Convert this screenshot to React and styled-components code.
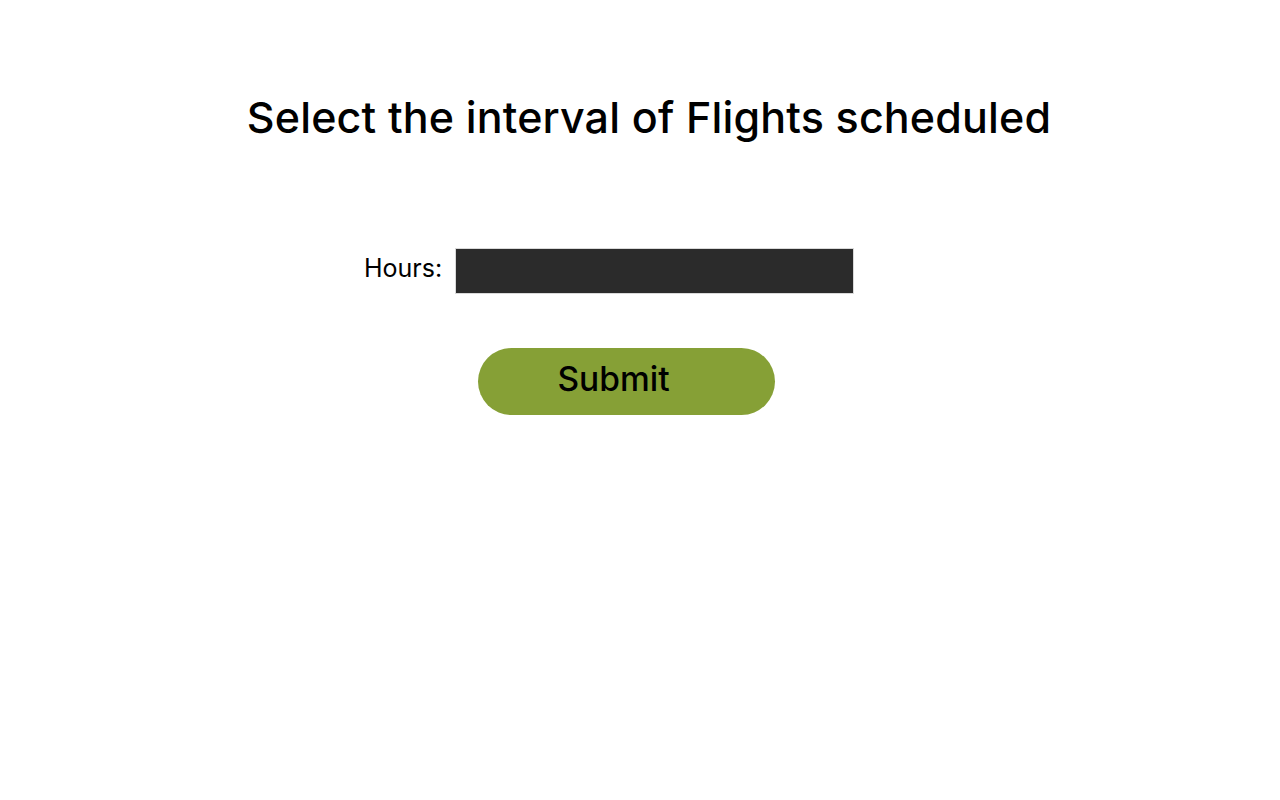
import styled, { createGlobalStyle } from "styled-components";

const GlobalStyle = createGlobalStyle`
  body {
    margin: 0;
    background: #ffffff;
    font-family: "Inter", "Noto Sans", sans-serif;
    color: #000000;
  }
`;

const Page = styled.main`
  width: 1280px;
  min-height: 800px;
  display: flex;
  flex-direction: column;
`;

const Title = styled.h1`
  margin: 86px 0 0;
  padding-left: 18px;
  text-align: center;
  font-size: 43px;
  font-weight: 500;
  line-height: 62px;
  letter-spacing: 0.15px;
`;

const Form = styled.form`
  display: flex;
  flex-direction: column;
  margin-top: 100px;
`;

const Row = styled.div`
  display: flex;
  align-items: center;
  gap: 13px;
  padding-left: 364px;
`;

const Label = styled.label`
  padding-bottom: 6px;
  font-size: 25px;
  font-weight: 400;
`;

const Input = styled.input`
  box-sizing: border-box;
  width: 399px;
  height: 46px;
  background: #2b2b2b;
  border: 1px solid #d9d9d9;
  color: #ffffff;
  outline: none;
`;

const Button = styled.button`
  box-sizing: border-box;
  width: 297px;
  height: 67px;
  margin: 54px 0 0 478px;
  padding: 0 26px 5px 0;
  border: none;
  border-radius: 34px;
  background: #86a036;
  font-family: "Inter", "Noto Sans", sans-serif;
  font-size: 33.5px;
  font-weight: 500;
  color: #000000;
  cursor: pointer;
`;

export default function App() {
  return (
    <>
      <GlobalStyle />
      <Page>
        <Title>Select the interval of Flights scheduled</Title>
        <Form onSubmit={(e) => e.preventDefault()}>
          <Row>
            <Label htmlFor="hours">Hours:</Label>
            <Input id="hours" type="text" />
          </Row>
          <Button type="submit">Submit</Button>
        </Form>
      </Page>
    </>
  );
}
